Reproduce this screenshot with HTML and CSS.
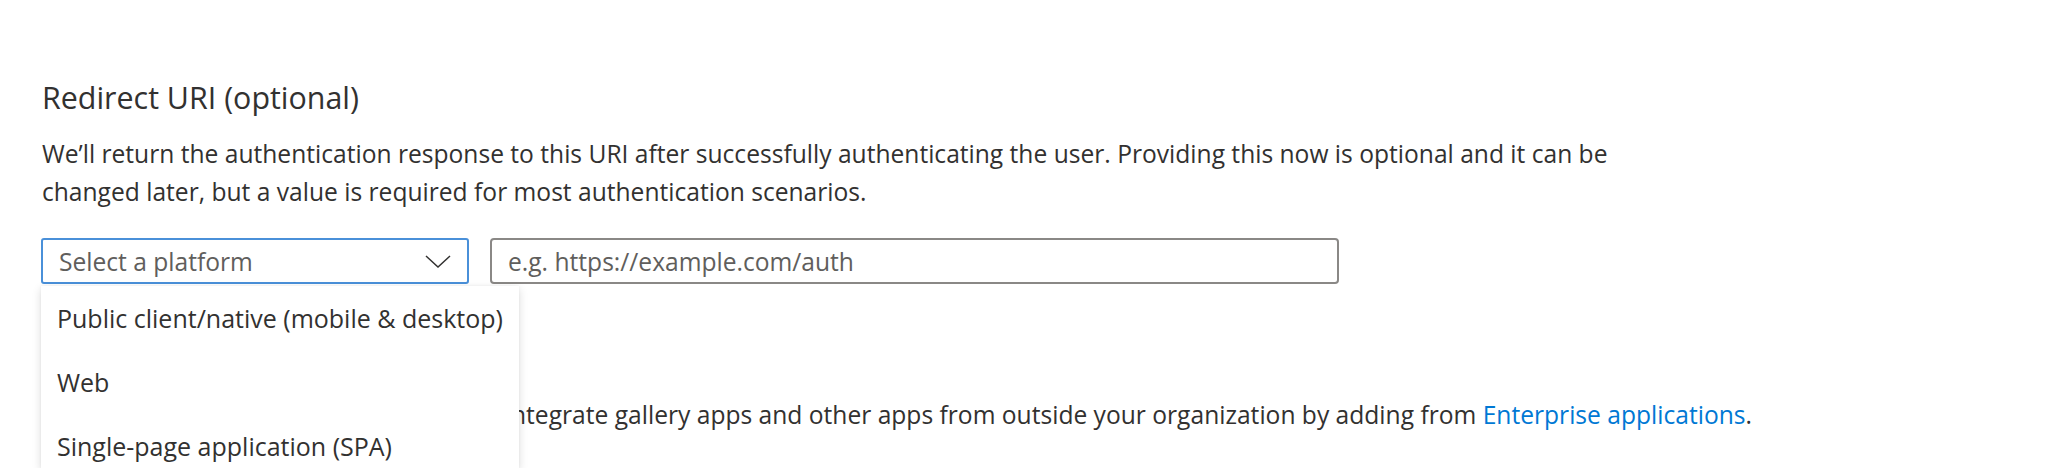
FILE: index.html
```html
<!DOCTYPE html>
<html lang="en">
<head>
<meta charset="utf-8">
<title>Register an application</title>
<link rel="stylesheet" href="styles.css">
</head>
<body>
<main class="page">
  <h2 class="title">Redirect URI (optional)</h2>
  <p class="desc">We’ll return the authentication response to this URI after successfully authenticating the user. Providing this now is optional and it can be<br>changed later, but a value is required for most authentication scenarios.</p>
  <div class="row">
    <div class="select-wrap">
      <div class="select">
        <span class="select-text">Select a platform</span>
        <svg class="chevron" width="26" height="13" viewBox="0 0 26 13"><polyline points="1,1 13,12 25,1" fill="none" stroke="#323130" stroke-width="1.5"/></svg>
      </div>
      <ul class="menu">
        <li class="menu-item">Public client/native (mobile &amp; desktop)</li>
        <li class="menu-item">Web</li>
        <li class="menu-item">Single-page application (SPA)</li>
      </ul>
    </div>
    <div class="input"><span class="placeholder">e.g. https://example.com/auth</span></div>
  </div>
  <p class="note">Register an app you're working on here. Integrate gallery apps and other apps from outside your organization by adding from <a class="link" href="#">Enterprise applications</a>.</p>
</main>
</body>
</html>
```
FILE: styles.css
```css
html, body {
  margin: 0;
  padding: 0;
  background: #ffffff;
}
body {
  height: 468px;
  overflow: hidden;
  font-family: "Open Sans", Lato, sans-serif;
  color: #323130;
}
.page {
  padding: 77px 0 0 42px;
}
.title {
  margin: 0;
  font-size: 30.4px;
  line-height: 42px;
  font-weight: 400;
}
.desc {
  margin: 16px 0 0 0;
  font-size: 24.6px;
  line-height: 38px;
}
.row {
  display: flex;
  margin-top: 27px;
  margin-left: -1px;
  gap: 21px;
}
.select-wrap {
  position: relative;
}
.select {
  box-sizing: border-box;
  width: 428px;
  height: 46px;
  border: 2px solid #4a90d9;
  border-radius: 3px;
  display: flex;
  align-items: center;
  justify-content: space-between;
  padding: 0 16px 0 16px;
}
.select-text {
  font-size: 24.6px;
  color: #605e5c;
}
.chevron {
  display: block;
}
.menu {
  position: absolute;
  top: 48px;
  left: 0;
  width: 478px;
  height: 182px;
  overflow: hidden;
  margin: 0;
  padding: 0;
  list-style: none;
  background: #ffffff;
  box-shadow: 0 3px 9px rgba(0, 0, 0, 0.14), 0 0 2px rgba(0, 0, 0, 0.06);
  z-index: 2;
}
.menu-item {
  height: 64px;
  line-height: 64px;
  padding-left: 16px;
  font-size: 25px;
  color: #323130;
  white-space: nowrap;
}
.input {
  box-sizing: border-box;
  width: 849px;
  height: 46px;
  border: 2px solid #8a8886;
  border-radius: 4px;
  display: flex;
  align-items: center;
  padding-left: 16px;
}
.placeholder {
  font-size: 24.6px;
  color: #605e5c;
}
.note {
  margin: 112px 0 0 0;
  font-size: 24.6px;
  line-height: 38px;
  white-space: nowrap;
}
.link {
  color: #0078d4;
  text-decoration: none;
}
```
